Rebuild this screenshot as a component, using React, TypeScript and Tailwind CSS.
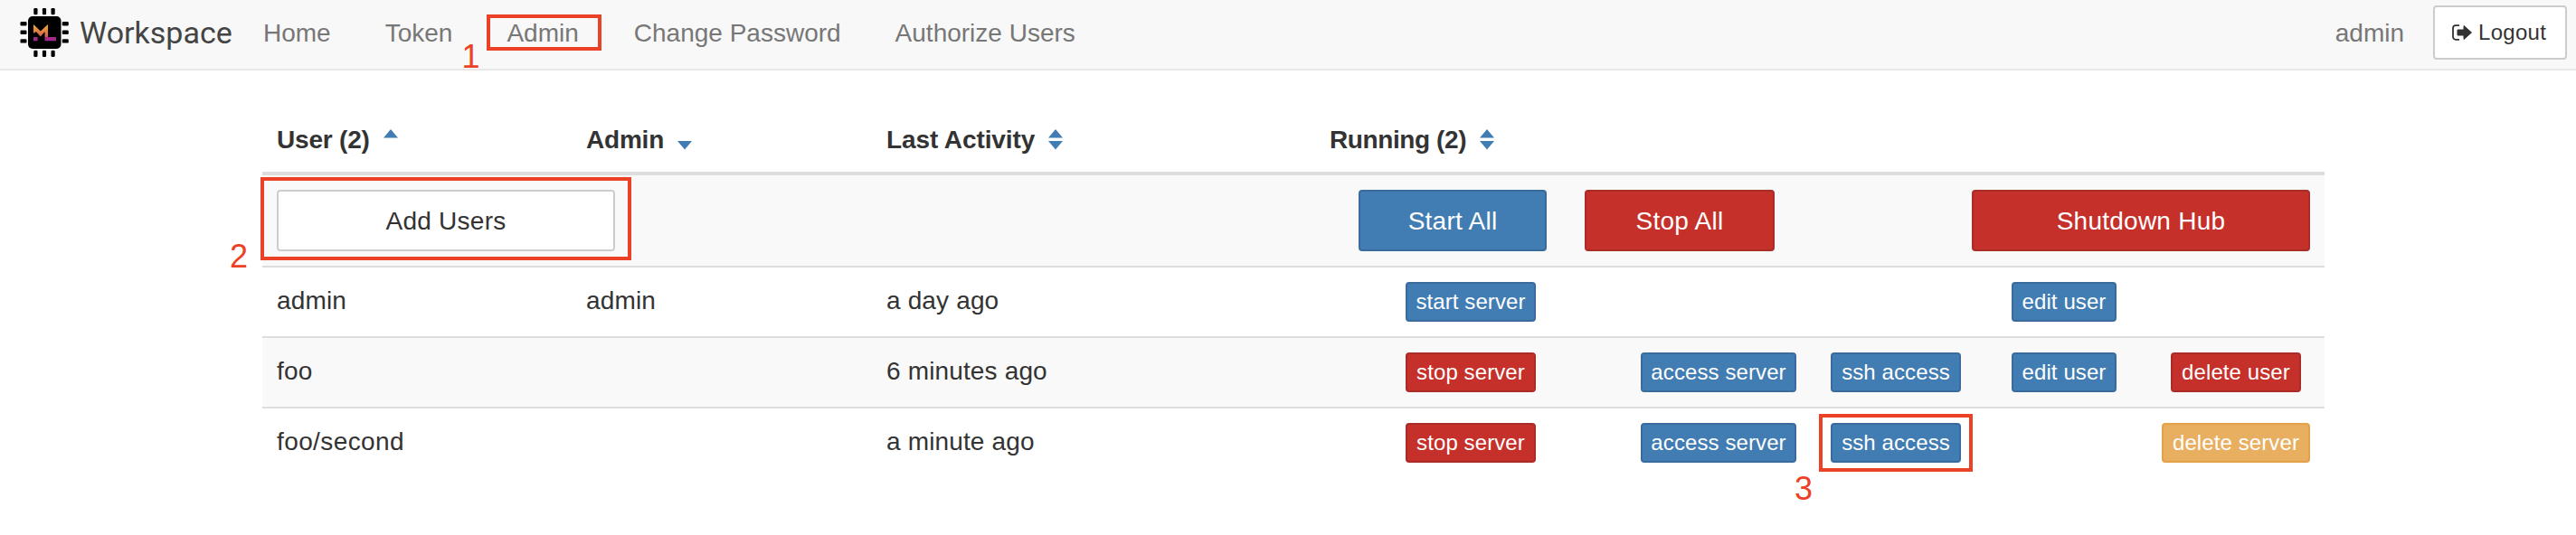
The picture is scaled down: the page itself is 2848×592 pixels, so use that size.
import { ReactNode } from "react";

const BLUE = "border-[#396c9d] bg-[#417cb2] text-white";
const RED = "border-[#a92d26] bg-[#c5302a] text-white";
const ORANGE = "border-[#e3a249] bg-[#e8af61] text-white";
const PLAIN = "border-[#ccc] bg-white text-[#333]";

function SmallButton({ tone, width, children }: { tone: string; width: string; children: ReactNode }) {
  return (
    <button className={`h-11 rounded border-2 text-2xl leading-9 tracking-[0.1px] whitespace-nowrap ${width} ${tone}`}>
      {children}
    </button>
  );
}

function BigButton({ tone, width, children }: { tone: string; width: string; children: ReactNode }) {
  return (
    <button
      className={`h-[68px] rounded border-2 pt-px text-[28px] leading-10 tracking-[0.25px] whitespace-nowrap ${width} ${tone}`}
    >
      {children}
    </button>
  );
}

function SortIcon({ up, down }: { up?: boolean; down?: boolean }) {
  return (
    <svg className="ml-[15px] h-10 w-4 fill-[#417cb2]" viewBox="0 0 16 40">
      {up && <path d="M0 18.5 8 9l8 9.5z" />}
      {down && <path d="M0 22h16l-8 9.5z" />}
    </svg>
  );
}

function Mark({ box, label, number }: { box: string; label: string; number: string }) {
  return (
    <>
      <span className={`absolute border-4 border-[#eb4127] ${box}`} />
      <span className={`absolute text-4xl leading-10 text-[#eb4127] ${label}`}>{number}</span>
    </>
  );
}

function Logo() {
  const pins = [0, 9.6, 19.2];
  return (
    <svg className="h-[54px] w-[54px]" viewBox="0 0 54 54">
      <defs>
        <linearGradient id="m" x1="0" y1="0" x2="0" y2="1">
          <stop offset="0" stopColor="#f6b02c" />
          <stop offset="1" stopColor="#cf5a55" />
        </linearGradient>
      </defs>
      {pins.map((p) => (
        <g key={p}>
          <rect x={15.3 + p} y="0" width="4.2" height="7.2" rx="1.2" />
          <rect x={15.3 + p} y="46.8" width="4.2" height="7.2" rx="1.2" />
          <rect x="0.5" y={15 + p} width="7" height="4.4" rx="1.2" />
          <rect x="46.8" y={15 + p} width="7" height="4.4" rx="1.2" />
        </g>
      ))}
      <rect x="9" y="9" width="36.5" height="36" rx="5" />
      <path d="M15 18l7.800 7.600L31 18v14h-3.500v-6l-4.700 5.500-4.800-5.500-3 2z" fill="url(#m)" />
      <path d="M15 32h4.600v4.200H15zM27.500 32H40v4.200H27.500z" fill="#a3298a" />
    </svg>
  );
}

function Row({ striped, cells }: { striped?: boolean; cells: ReactNode[] }) {
  return (
    <div
      className={`grid grid-cols-[342px_332px_490px_344px_204px_188px_184px_196px] border-t-2 border-[#ddd] py-4 ${striped ? "bg-[#f9f9f9]" : "bg-white"}`}
    >
      {cells.map((cell, i) => (
        <div key={i} className={`h-11 leading-10 ${i < 3 ? "pt-px pl-4 tracking-[0.15px]" : "flex justify-center"}`}>
          {cell}
        </div>
      ))}
    </div>
  );
}

export default function App() {
  return (
    <div className="h-[592px] w-[2848px] overflow-hidden bg-white font-['Liberation_Sans',sans-serif] text-[28px] leading-10 text-[#333]">
      <header className="flex h-[78px] items-start border-b-2 border-[#e7e7e7] bg-[#f8f8f8] pr-2.5 pl-[22px] text-[#777]">
        <div className="flex w-[239px] pt-[9px]">
          <Logo />
          <span className="ml-3 pt-[7px] font-['Roboto',sans-serif] text-[34px] leading-10 font-normal text-[#444]">
            Workspace
          </span>
        </div>
        <nav className="flex pt-[17px]">
          <a className="px-[30px]">Home</a>
          <a className="px-[30px]">Token</a>
          <a className="relative px-[30px]">
            Admin
            <Mark box="left-2 -top-px h-10 w-[127px]" label="-left-[20px] top-[26px]" number="1" />
          </a>
          <a className="pr-[30px] pl-[31px]">Change Password</a>
          <a className="px-[30px]">Authorize Users</a>
        </nav>
        <span className="mr-8 ml-auto pt-[17px]">admin</span>
        <button className="mt-1.5 flex h-[60px] w-[148px] items-center rounded border-2 border-[#ccc] bg-white pl-[19px] text-2xl tracking-[0.3px] text-[#333]">
          <svg className="mr-[7px] h-[18px] w-[22px]" viewBox="0 0 22 18">
            <path d="M8 1.2H4A3 3 0 0 0 1 4.200v9.600a3 3 0 0 0 3 3h4" fill="none" stroke="#333" strokeWidth="1.8" />
            <path d="M6 6h7V1.500L21.500 9 13 16.500V12H6z" fill="#333" stroke="#333" strokeLinejoin="round" />
          </svg>
          Logout
        </button>
      </header>

      <main className="mt-10 ml-[290px] w-[2280px]">
        <div className="grid h-[76px] grid-cols-[342px_332px_490px_1fr] border-b-4 border-[#ddd] pt-4 font-bold">
          <div className="flex pl-4 tracking-[-0.2px]">
            <span className="pt-px">User (2)</span>
            <SortIcon up />
          </div>
          <div className="flex pl-4 tracking-[-0.2px]">
            <span className="pt-px">Admin</span>
            <SortIcon down />
          </div>
          <div className="flex pl-4 tracking-[-0.1px]">
            <span className="pt-px">Last Activity</span>
            <SortIcon up down />
          </div>
          <div className="flex pl-4 tracking-[-0.4px]">
            <span className="pt-px">Running (2)</span>
            <SortIcon up down />
          </div>
        </div>
        <div className="flex bg-[#f9f9f9] px-4 py-4">
          <div className="relative">
            <BigButton tone={PLAIN} width="w-[374px]">Add Users</BigButton>
            <Mark box="-left-[18px] -top-[14px] h-[92px] w-[410px]" label="-left-[52px] top-[54px]" number="2" />
          </div>
          <div className="ml-auto flex">
            <BigButton tone={BLUE} width="w-[208px]">Start All</BigButton>
            <div className="mr-[218px] ml-[42px]">
              <BigButton tone={RED} width="w-[210px]">Stop All</BigButton>
            </div>
            <BigButton tone={RED} width="w-[374px]">Shutdown Hub</BigButton>
          </div>
        </div>
        <Row
          cells={[
            "admin",
            "admin",
            "a day ago",
            <SmallButton tone={BLUE} width="w-36">start server</SmallButton>,
            null,
            null,
            <SmallButton tone={BLUE} width="w-[116px]">edit user</SmallButton>,
            null,
          ]}
        />
        <Row
          striped
          cells={[
            "foo",
            null,
            "6 minutes ago",
            <SmallButton tone={RED} width="w-36">stop server</SmallButton>,
            <SmallButton tone={BLUE} width="w-[172px]">access server</SmallButton>,
            <SmallButton tone={BLUE} width="w-36">ssh access</SmallButton>,
            <SmallButton tone={BLUE} width="w-[116px]">edit user</SmallButton>,
            <SmallButton tone={RED} width="w-36">delete user</SmallButton>,
          ]}
        />
        <Row
          cells={[
            <span className="tracking-[0.4px]">foo/second</span>,
            null,
            "a minute ago",
            <SmallButton tone={RED} width="w-36">stop server</SmallButton>,
            <SmallButton tone={BLUE} width="w-[172px]">access server</SmallButton>,
            <div className="relative">
              <SmallButton tone={BLUE} width="w-36">ssh access</SmallButton>
              <Mark box="-left-[13px] -top-[10px] h-16 w-[170px]" label="-left-[40px] top-[53px]" number="3" />
            </div>,
            null,
            <SmallButton tone={ORANGE} width="w-[164px]">delete server</SmallButton>,
          ]}
        />
      </main>
    </div>
  );
}
